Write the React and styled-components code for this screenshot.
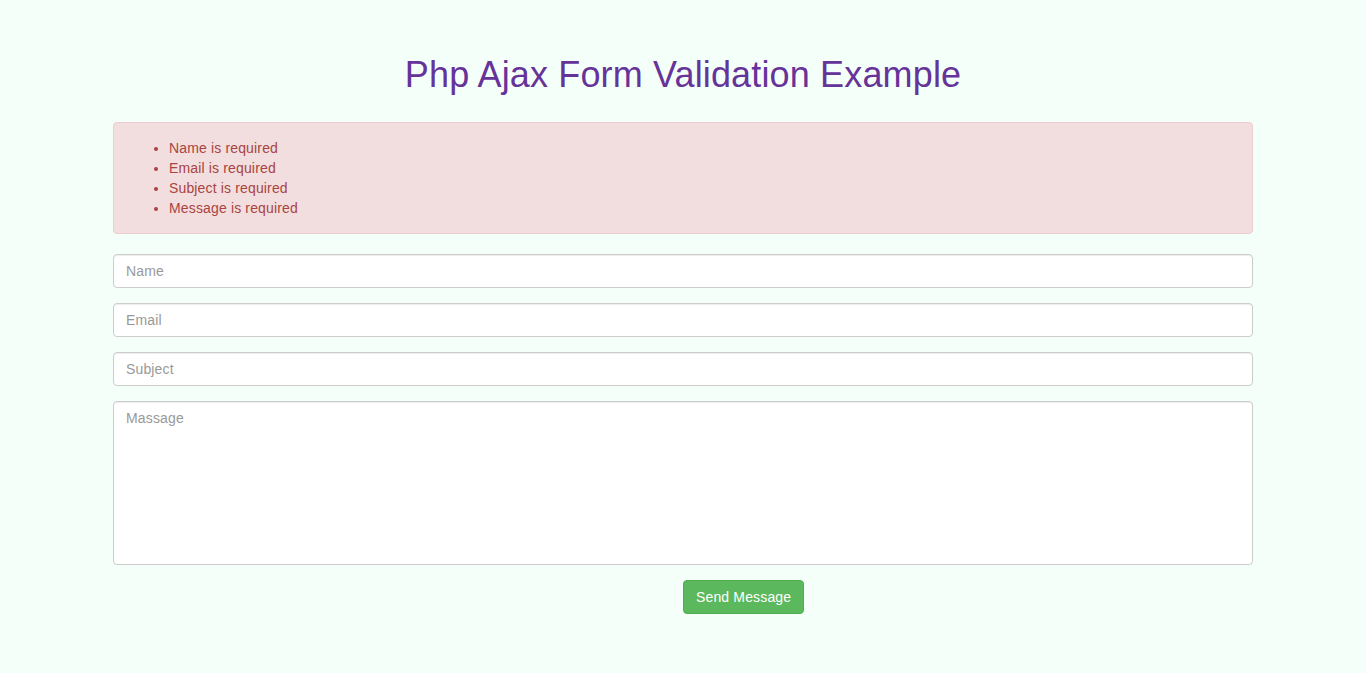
import React from 'react';
import styled, { createGlobalStyle } from 'styled-components';

const GlobalStyle = createGlobalStyle`
  * {
    box-sizing: border-box;
  }

  body {
    margin: 0;
    background-color: #f5fffa;
    font-family: "Liberation Sans", Arial, Helvetica, sans-serif;
    font-size: 14px;
    line-height: 1.42857143;
    letter-spacing: 0.15px;
    color: #333;
  }
`;

const errors = [
  'Name is required',
  'Email is required',
  'Subject is required',
  'Message is required',
];

const App = () => {
  return (
    <>
      <GlobalStyle />
      <Container>
        <Title>Php Ajax Form Validation Example</Title>

        <Alert>
          <ErrorList>
            {errors.map((msg) => (
              <li key={msg}>{msg}</li>
            ))}
          </ErrorList>
        </Alert>

        <form onSubmit={(e) => e.preventDefault()}>
          <FormGroup>
            <Input type="text" name="name" placeholder="Name" />
          </FormGroup>
          <FormGroup>
            <Input type="text" name="email" placeholder="Email" />
          </FormGroup>
          <FormGroup>
            <Input type="text" name="subject" placeholder="Subject" />
          </FormGroup>
          <FormGroup>
            <TextArea name="message" placeholder="Massage" />
          </FormGroup>
          <ButtonRow>
            <SubmitButton type="submit">Send Message</SubmitButton>
          </ButtonRow>
        </form>
      </Container>
    </>
  );
};

// Styled Components
const Container = styled.div`
  width: 1170px;
  margin: 0 auto;
  padding: 55px 15px 40px;
`;

const Title = styled.h1`
  margin: 0 0 27px;
  font-size: 36px;
  font-weight: 500;
  line-height: 1.1;
  text-align: center;
  color: #663399;
`;

const Alert = styled.div`
  padding: 15px;
  margin-bottom: 20px;
  border: 1px solid #ebccd1;
  border-radius: 4px;
  background-color: #f2dede;
  color: #a94442;
`;

const ErrorList = styled.ul`
  margin: 0;
  padding-left: 40px;
`;

const FormGroup = styled.div`
  margin-bottom: 15px;
`;

const fieldStyles = `
  display: block;
  width: 100%;
  padding: 6px 12px;
  font-family: "Liberation Sans", Arial, Helvetica, sans-serif;
  font-size: 14px;
  line-height: 1.42857143;
  letter-spacing: 0.15px;
  color: #555;
  background-color: #fff;
  border: 1px solid #ccc;
  border-radius: 4px;
  box-shadow: inset 0 1px 1px rgba(0, 0, 0, 0.075);
  outline: none;

  &::placeholder {
    color: #999;
  }
`;

const Input = styled.input`
  ${fieldStyles}
  height: 34px;
`;

const TextArea = styled.textarea`
  ${fieldStyles}
  height: 164px;
  resize: none;
`;

const ButtonRow = styled.div`
  padding-left: 50%;
`;

const SubmitButton = styled.button`
  display: inline-block;
  height: 34px;
  padding: 6px 12px;
  font-family: "Liberation Sans", Arial, Helvetica, sans-serif;
  font-size: 14px;
  line-height: 1.42857143;
  letter-spacing: 0.15px;
  color: #fff;
  background-color: #5cb85c;
  border: 1px solid #4cae4c;
  border-radius: 4px;
  cursor: pointer;

  &:hover {
    background-color: #449d44;
  }
`;

export default App;
